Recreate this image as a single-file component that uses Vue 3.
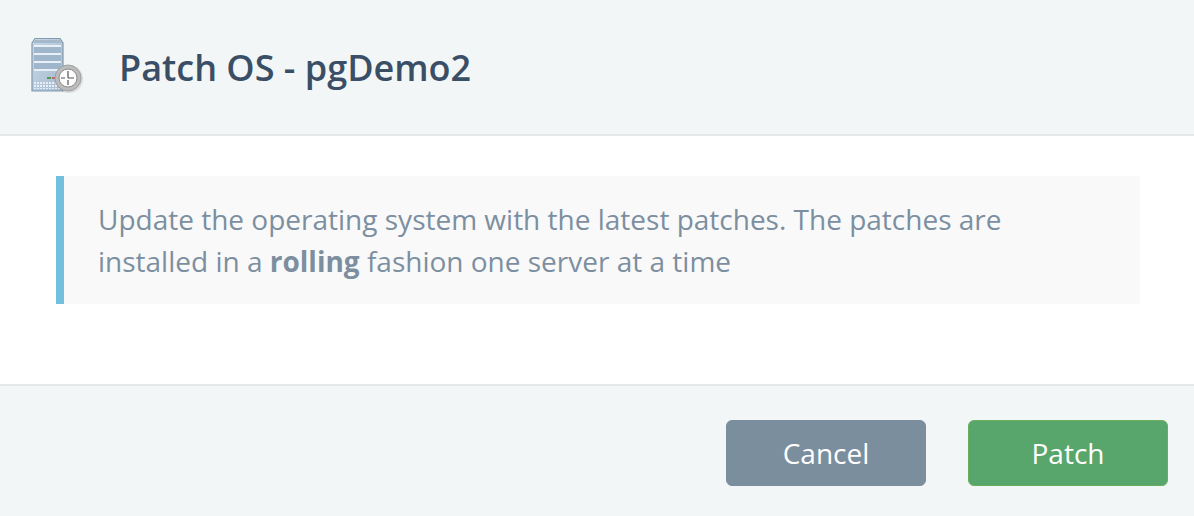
<template>
  <div class="dialog">
    <header class="head">
      <svg class="icon" width="60" height="60" viewBox="0 0 60 60">
        <defs>
          <linearGradient id="case" x1="0" y1="0" x2="1" y2="1">
            <stop offset="0" stop-color="#c9d8e6" />
            <stop offset="1" stop-color="#a4bbd1" />
          </linearGradient>
          <pattern id="dots" width="3" height="3" patternUnits="userSpaceOnUse">
            <rect width="2" height="2" fill="#e6edf4" />
          </pattern>
        </defs>
        <path d="M4 6 7 1.500h25L35 6v48H4z" fill="url(#case)" stroke="#8299b0" stroke-width="1.200" />
        <path d="M7 3h25l1.500 3H5.500z" fill="#a5b9cb" />
        <g fill="#e8eff5">
          <rect x="6" y="8" width="27" height="2" />
          <rect x="6" y="16" width="27" height="2" />
          <rect x="6" y="24" width="27" height="2" />
          <rect x="6" y="32" width="27" height="2" />
        </g>
        <g fill="#9fb6cc">
          <rect x="6" y="10" width="27" height="6" />
          <rect x="6" y="18" width="27" height="6" />
          <rect x="6" y="26" width="27" height="6" />
        </g>
        <rect x="19" y="40" width="4" height="2" fill="#4f9d55" />
        <rect x="24" y="40" width="3" height="2" fill="#cf5c66" />
        <rect x="6" y="45" width="27" height="7" fill="url(#dots)" />
        <circle cx="41" cy="42" r="14" fill="#777" opacity="0.2" />
        <circle cx="40" cy="41" r="13" fill="#bcbcbc" stroke="#a0a0a0" />
        <circle cx="40" cy="41" r="9" fill="#fdfdfd" stroke="#8c8c8c" />
        <path d="M40 34v7M40 41h6M40 43v5M33 41h4" stroke="#555" stroke-width="1.200" fill="none" />
      </svg>
      <h1 class="title">Patch OS - pgDemo2</h1>
    </header>
    <main class="body">
      <div class="note">
        Update the operating system with the latest patches. The patches are
        installed in a <strong>rolling</strong> fashion one server at a time
      </div>
    </main>
    <footer class="foot">
      <button class="btn cancel">Cancel</button>
      <button class="btn patch">Patch</button>
    </footer>
  </div>
</template>

<script setup>
</script>

<style>
html, body {
  margin: 0;
  background: #fff;
}
</style>

<style scoped>
.dialog {
  width: 1194px;
  height: 516px;
  display: flex;
  flex-direction: column;
  font-family: "Open Sans", "Liberation Sans", sans-serif;
  overflow: hidden;
}

.head {
  height: 134px;
  flex: none;
  display: flex;
  align-items: center;
  padding-left: 28px;
  background: #f3f6f7;
  border-bottom: 2px solid #e4e8e9;
}

.icon {
  flex: none;
  margin-right: 31px;
  filter: blur(0.5px);
}

.title {
  margin: 0;
  font-size: 36px;
  font-weight: 600;
  color: #3a4f66;
}

.body {
  flex: 1;
  padding: 40px 54px 0 56px;
}

.note {
  height: 128px;
  box-sizing: border-box;
  padding: 22px 34px 0;
  background: #f9f9f9;
  border-left: 8px solid #73bfde;
  font-size: 28px;
  line-height: 42px;
  color: #7c8fa0;
}

.note strong {
  font-weight: 700;
}

.foot {
  height: 132px;
  flex: none;
  box-sizing: border-box;
  display: flex;
  justify-content: flex-end;
  align-items: flex-start;
  gap: 42px;
  padding: 34px 26px 0 0;
  background: #f3f6f7;
  border-top: 2px solid #e4e8e9;
}

.btn {
  width: 200px;
  height: 66px;
  border-radius: 6px;
  font-family: inherit;
  font-size: 28px;
  color: #fff;
  cursor: pointer;
}

.cancel {
  background: #7b8e9e;
  border: 1px solid #7b8e9e;
}

.patch {
  background: #58a66b;
  border: 1px solid #68ae5e;
}
</style>
